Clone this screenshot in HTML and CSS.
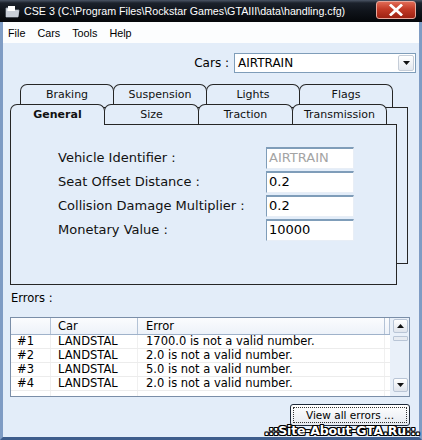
FILE: index.html
```html
<!DOCTYPE html>
<html>
<head>
<meta charset="utf-8">
<link rel="stylesheet" href="styles.css">
</head>
<body>
<div class="window">
  <div class="titlebar">
    <svg class="appicon" width="15" height="13" viewBox="0 0 15 13">
      <path d="M1 3 L1 12 L13 12 L14 5 L6 5 L5 3 Z" fill="#e8ebf0" stroke="#9aa3b0" stroke-width="0.8"/>
      <path d="M3 1 L10 1 L10 6 L3 6 Z" fill="#ffffff"/>
      <path d="M2 6 L14 6 L13 12 L1 12 Z" fill="#c9cfd8"/>
    </svg>
    <span class="title">CSE 3 (C:\Program Files\Rockstar Games\GTAIII\data\handling.cfg)</span>
    <div class="close">
      <svg width="14" height="12" viewBox="0 0 14 12"><path d="M2 1.5 L12 10.5 M12 1.5 L2 10.5" stroke="#ffffff" stroke-width="2.8" stroke-linecap="square"/></svg>
    </div>
  </div>
  <div class="frame">
    <div class="menubar"><span>File</span><span>Cars</span><span>Tools</span><span>Help</span></div>
    <div class="client">
      <div class="cars-row">
        <span class="cars-label">Cars :</span>
        <div class="combo">
          <span class="combo-text">AIRTRAIN</span>
          <div class="combo-btn"><svg width="7" height="4" viewBox="0 0 7 4"><path d="M0 0 L7 0 L3.5 4 Z" fill="#111"/></svg></div>
        </div>
      </div>

      <div class="tabstack">
        <div class="layer back">
          <div class="tabrow">
            <div class="tab">Braking</div>
            <div class="tab">Suspension</div>
            <div class="tab">Lights</div>
            <div class="tab">Flags</div>
          </div>
          <div class="page back-page"></div>
        </div>
        <div class="layer front">
          <div class="tabrow">
            <div class="tab active">General</div>
            <div class="tab">Size</div>
            <div class="tab">Traction</div>
            <div class="tab">Transmission</div>
          </div>
          <div class="page front-page">
            <div class="field"><span class="flabel">Vehicle Identifier :</span><div class="input disabled">AIRTRAIN</div></div>
            <div class="field"><span class="flabel">Seat Offset Distance :</span><div class="input">0.2</div></div>
            <div class="field"><span class="flabel">Collision Damage Multiplier :</span><div class="input">0.2</div></div>
            <div class="field"><span class="flabel">Monetary Value :</span><div class="input">10000</div></div>
          </div>
        </div>
      </div>

      <div class="errors-label">Errors :</div>

      <div class="listbox">
        <div class="list-main">
          <div class="lhead">
            <div class="c0"></div><div class="c1">Car</div><div class="c2">Error</div><div class="c3"></div>
          </div>
          <div class="lrow"><div class="c0">#1</div><div class="c1">LANDSTAL</div><div class="c2">1700.0 is not a valid number.</div></div>
          <div class="lrow"><div class="c0">#2</div><div class="c1">LANDSTAL</div><div class="c2">2.0 is not a valid number.</div></div>
          <div class="lrow"><div class="c0">#3</div><div class="c1">LANDSTAL</div><div class="c2">5.0 is not a valid number.</div></div>
          <div class="lrow"><div class="c0">#4</div><div class="c1">LANDSTAL</div><div class="c2">2.0 is not a valid number.</div></div>
          <div class="lrow empty"><div class="c0"></div><div class="c1"></div><div class="c2"></div></div>
        </div>
        <div class="vscroll">
          <div class="sbtn"><svg width="7" height="4" viewBox="0 0 7 4"><path d="M0 4 L7 4 L3.5 0 Z" fill="#111"/></svg></div>
          <div class="thumb"></div>
          <div class="sbtn down"><svg width="7" height="4" viewBox="0 0 7 4"><path d="M0 0 L7 0 L3.5 4 Z" fill="#111"/></svg></div>
        </div>
      </div>

      <div class="btn-row">
        <div class="btn"><span class="focus">View all errors ...</span></div>
      </div>
    </div>
  </div>
</div>
<div class="watermark">.::Site-About-GTA.Ru::.</div>
</body>
</html>
```

FILE: styles.css
```css
* { box-sizing: border-box; }
html, body { margin: 0; padding: 0; }
body {
  width: 422px;
  height: 440px;
  overflow: hidden;
  position: relative;
  background: #e3edf9;
  font-family: "DejaVu Sans", Verdana, sans-serif;
  color: #000;
}
.window {
  width: 422px;
  height: 440px;
  display: flex;
  flex-direction: column;
}
.titlebar {
  height: 22px;
  flex: none;
  display: flex;
  align-items: center;
  padding-left: 5px;
  background: linear-gradient(to bottom, #4b5565 0px, #1c222c 3px, #10141b 50%, #05070a 100%);
}
.appicon { flex: none; }
.title {
  margin-left: 4px;
  font-family: "Liberation Sans", Arial, sans-serif;
  font-size: 10.7px;
  color: #ffffff;
  white-space: nowrap;
}
.close {
  margin-left: auto;
  margin-right: 6px;
  align-self: flex-start;
  margin-top: 1px;
  width: 40px;
  height: 18px;
  border: 1px solid #e8a89c;
  border-radius: 3px;
  background: linear-gradient(to bottom, #e06a55 0%, #c23a26 45%, #9e2213 100%);
  display: flex;
  align-items: center;
  justify-content: center;
}
.frame {
  flex: 1;
  display: flex;
  flex-direction: column;
  border-left: 3px solid #7f9cc4;
  border-right: 3px solid #7f9cc4;
  border-bottom: 3px solid #3e5d8c;
  min-height: 0;
}
.menubar {
  height: 21px;
  flex: none;
  background: #fcfdfe;
  display: flex;
  align-items: center;
  padding-left: 5px;
  gap: 12px;
  font-family: "Liberation Sans", Arial, sans-serif;
  font-size: 10.8px;
}
.client {
  flex: 1;
  min-height: 0;
  overflow: hidden;
  background: #e3edf9;
  padding: 10px 3px 0 7px;
  display: flex;
  flex-direction: column;
}
.cars-row {
  display: flex;
  justify-content: flex-end;
  align-items: center;
  height: 20px;
}
.cars-label {
  font-size: 12px;
  margin-right: 5px;
}
.combo {
  width: 182px;
  height: 20px;
  border: 1px solid #7f9db9;
  background: #fff;
  display: flex;
  align-items: center;
  padding: 1px;
}
.combo-text {
  flex: 1;
  font-size: 12px;
  padding-left: 2px;
}
.combo-btn {
  width: 16px;
  height: 16px;
  border: 1px solid #c5cdd8;
  border-radius: 2px;
  background: linear-gradient(to bottom, #ffffff, #e4e8ee);
  display: flex;
  align-items: center;
  justify-content: center;
}

/* tabs */
.tabstack {
  display: grid;
  margin-top: 11px;
  flex: none;
}
.layer {
  grid-area: 1 / 1;
  display: flex;
  flex-direction: column;
}
.back { margin-left: 10px; }
.front { margin-top: 20px; }
.tabrow { display: flex; }
.tab {
  width: 95px;
  height: 20px;
  border: 1px solid #262626;
  border-bottom: none;
  border-radius: 7px 7px 0 0;
  background: #e3edf9;
  font-size: 11px;
  display: flex;
  justify-content: center;
  align-items: flex-start;
  padding-top: 3px;
  color: #111;
}
.tab + .tab { margin-left: -1px; }
.back .tab {
  width: 94px;
  height: 23px;
  padding-top: 3px;
}
.tab.active {
  font-weight: bold;
  position: relative;
  z-index: 2;
  height: 21px;
  margin-bottom: -1px;
}
.page {
  border: 1px solid #262626;
  background: #e3edf9;
}
.back-page {
  width: 388px;
  height: 157px;
}
.front-page {
  width: 387px;
  height: 161px;
  padding: 22px 0 0 47px;
}
.field {
  display: flex;
  align-items: center;
  height: 22px;
  margin-bottom: 2px;
}
.flabel {
  width: 208px;
  font-size: 13px;
  color: #111;
  padding-bottom: 2px;
}
.input {
  width: 88px;
  height: 22px;
  background: #fff;
  border-top: 2px solid #7f9db9;
  border-left: 1px solid #7f9db9;
  border-right: 1px solid #e8eef6;
  border-bottom: 1px solid #e8eef6;
  font-size: 13px;
  padding-left: 2px;
  line-height: 18px;
}
.input.disabled { color: #a4a4a4; }

.errors-label {
  margin-top: 6px;
  font-size: 11.5px;
  line-height: 14px;
  height: 14px;
  padding-left: 1px;
}

/* list */
.listbox {
  margin-top: 12px;
  width: 400px;
  height: 80px;
  flex: none;
  border: 1px solid #7a8ea8;
  display: flex;
  background: #fff;
}
.list-main {
  width: 379px;
  overflow: hidden;
  font-size: 11.5px;
}
.lhead {
  height: 17px;
  display: flex;
  background: linear-gradient(to bottom, #fbfcfe, #edf2f9);
  border-bottom: 1px solid #9fb2ca;
  line-height: 16px;
}
.lhead > div { border-right: 1px solid #b4c3d6; }
.c0 { width: 40px; padding-left: 6px; flex: none; }
.c1 { width: 87px; padding-left: 7px; flex: none; }
.c2 { width: 247px; padding-left: 8px; flex: none; white-space: nowrap; }
.c3 { flex: 1; }
.lrow {
  height: 14px;
  display: flex;
  line-height: 13px;
  border-bottom: 1px solid #ececec;
}
.lrow > div { border-right: 1px solid #f0f0f0; }
.vscroll {
  width: 19px;
  background: #e9f0f9;
  display: flex;
  flex-direction: column;
  padding: 1px 1px 4px 3px;
}
.sbtn {
  width: 15px;
  height: 14px;
  border: 1px solid #b9c5d6;
  border-radius: 2px;
  background: linear-gradient(to bottom, #ffffff, #dfe4ec);
  display: flex;
  align-items: center;
  justify-content: center;
}
.sbtn.down { margin-top: auto; }
.thumb {
  margin-top: 3px;
  width: 15px;
  height: 5px;
  border: 1px solid #b9c5d6;
  border-radius: 1px;
  background: #e7ebf1;
}

.btn-row {
  margin-top: 7px;
  display: flex;
  justify-content: flex-end;
  padding-right: 6px;
}
.btn {
  width: 120px;
  height: 22px;
  border: 1px solid #1c2838;
  border-radius: 3px;
  background: linear-gradient(to bottom, #ffffff, #e6eaf1);
  padding: 2px;
  display: flex;
}
.focus {
  flex: 1;
  border: 1px dotted #333;
  font-size: 10.5px;
  display: flex;
  align-items: center;
  justify-content: center;
}

.watermark {
  position: absolute;
  right: 2px;
  bottom: 2px;
  font-family: "DejaVu Sans", sans-serif;
  font-weight: bold;
  font-size: 12.5px;
  letter-spacing: -0.2px;
  color: #ffffff;
  text-shadow: 1px 0 0 #000, -1px 0 0 #000, 0 1px 0 #000, 0 -1px 0 #000, 1px 1px 0 #000, -1px -1px 0 #000, 1px -1px 0 #000, -1px 1px 0 #000;
}
```
